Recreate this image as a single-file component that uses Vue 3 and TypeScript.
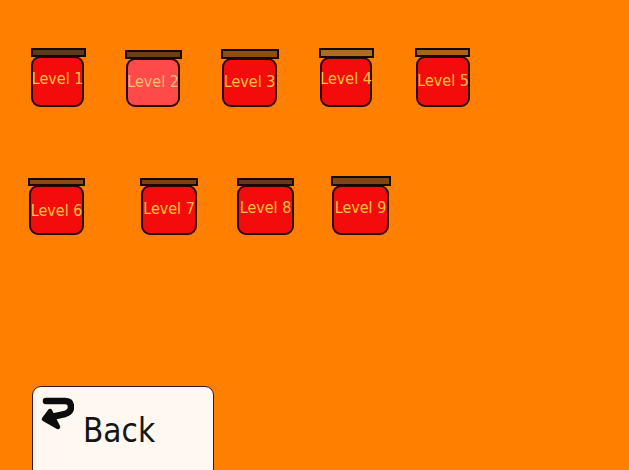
<script setup lang="ts">
interface Jar {
  name: string; gap: number; top: number; lidW: number; lidH: number; bodyX: number;
  bodyW: number; bodyH: number; lid: string; body: string; dy: number;
}
const mk = (n: number, gap: number, top: number, lidW: number, lidH: number, bodyX: number, bodyW: number, bodyH: number, lid: string, dy: number, body = '#f40c0c'): Jar => ({ name: `Level ${n}`, gap, top, lidW, lidH, bodyX, bodyW, bodyH, lid, body, dy });
const rowA: Jar[] = [
  mk(1, 31, 48, 55, 9, 0, 53, 51, '#5e3a16', -3),
  mk(2, 39, 50, 57, 9, 1, 54, 49, '#6b4014', -1, '#ff4a4a'),
  mk(3, 39, 49, 58, 10, 1, 55, 49, '#8a4f12', -1),
  mk(4, 40, 48, 55, 10, 1, 52, 50, '#ad6d1c', -3),
  mk(5, 41, 48, 55, 9, 1, 54, 51, '#a8641a', -1),
];
const rowB: Jar[] = [
  mk(6, 28, 178, 57, 8, 1, 55, 50, '#8a4a18', 1),
  mk(7, 55, 178, 58, 8, 1, 56, 50, '#7a4210', -1),
  mk(8, 39, 178, 57, 8, 0, 57, 50, '#663a14', -2),
  mk(9, 37, 176, 60, 10, 1, 57, 50, '#80480f', -2),
];
const jarStyle = (j: Jar) => ({ marginLeft: `${j.gap}px`, width: `${j.lidW}px`, marginTop: `${j.top - (j.top > 100 ? 176 : 48)}px` });
const lidStyle = (j: Jar) => ({ height: `${j.lidH}px`, background: j.lid });
const bodyStyle = (j: Jar) => ({ width: `${j.bodyW}px`, height: `${j.bodyH}px`, background: j.body, marginLeft: `${j.bodyX}px` });
const labelStyle = (j: Jar) => ({ transform: `translateY(${j.dy}px)` });
</script>

<template>
  <main class="page">
    <section class="row row-a">
      <button v-for="j in rowA" :key="j.name" class="jar" :style="jarStyle(j)">
        <span class="lid" :style="lidStyle(j)"></span>
        <span class="body" :style="bodyStyle(j)"><span class="label" :class="{ pale: j.name === 'Level 2' }" :style="labelStyle(j)">{{ j.name }}</span></span>
      </button>
    </section>
    <section class="row row-b">
      <button v-for="j in rowB" :key="j.name" class="jar" :style="jarStyle(j)">
        <span class="lid" :style="lidStyle(j)"></span>
        <span class="body" :style="bodyStyle(j)"><span class="label" :style="labelStyle(j)">{{ j.name }}</span></span>
      </button>
    </section>
    <button class="back">
      <svg class="back-icon" width="36" height="36" viewBox="0 0 36 36" fill="none" stroke="#0c0c0c" stroke-width="6.5" stroke-linecap="round" stroke-linejoin="round">
        <path d="M8 5 H27 Q33 5 33 11 Q33 16 27 18 L9 22" />
        <path d="M12 15 L6 23 L20 31 Z" fill="#0c0c0c" stroke-width="4.5" />
      </svg>
      <span class="back-text">Back</span>
    </button>
  </main>
</template>

<style scoped>
.page {
  width: 629px;
  height: 470px;
  background: #ff8000;
  overflow: hidden;
  display: flex;
  flex-direction: column;
  font-family: "DejaVu Sans Condensed", "DejaVu Sans", sans-serif;
  font-stretch: condensed;
}
.row { display: flex; align-items: flex-start; flex: none; box-sizing: border-box; }
.row-a { padding-top: 48px; height: 176px; }
.row-b { height: 210px; }
button { padding: 0; border: 0; background: none; font: inherit; }
.jar {
  display: flex;
  flex-direction: column;
  align-items: flex-start;
  flex: none;
}
.lid {
  display: block;
  box-sizing: border-box;
  width: 100%;
  border: 2px solid #160806;
  margin-bottom: -1px;
  position: relative;
}
.body {
  display: flex;
  align-items: center;
  justify-content: center;
  box-sizing: border-box;
  border: 2px solid #2a0405;
  border-radius: 9px;
}
.label {
  font-size: 16px;
  line-height: 20px;
  color: #ffc23c;
  white-space: nowrap;
}
.label.pale { color: #ffc070; }
.back {
  width: 182px;
  height: 92px;
  margin-left: 32px;
  box-sizing: border-box;
  background: #fff8f1;
  border: 1px solid #3a1a08;
  border-radius: 9px;
  display: flex;
  align-items: flex-start;
  flex: none;
  color: #141414;
}
.back-icon { margin: 9px 0 0 5px; flex: none; }
.back-text {
  font-size: 33px;
  line-height: 44px;
  margin: 22px 0 0 9px;
}
</style>
